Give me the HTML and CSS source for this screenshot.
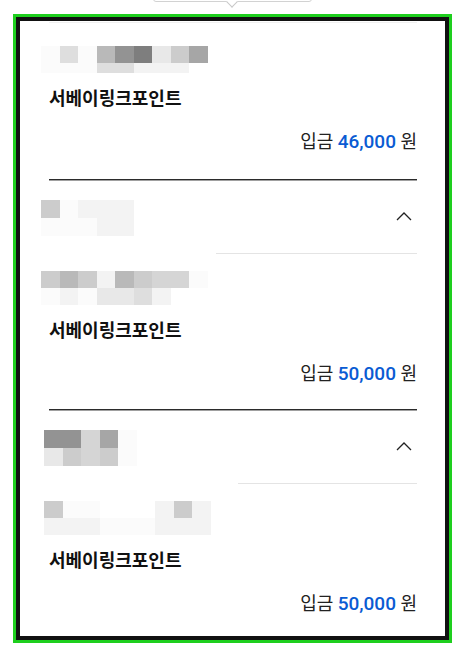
FILE: index.html
```html
<!DOCTYPE html>
<html lang="ko">
<head>
  <meta charset="UTF-8">
  <title>입금 내역</title>
  <link rel="stylesheet" href="styles.css">
</head>
<body>

  <div class="tooltip"></div>

  <div class="frame">
    <div class="panel">

      <section class="record partial">
        <div class="rule-light"></div>
        <div class="detail">
          <div class="mosaic short">
            <i class="t0"></i><i class="t3"></i><i class="t0"></i><i class="t6"></i><i class="t8"></i><i class="t9"></i><i class="t2"></i><i class="t5"></i><i class="t7"></i>
            <i class="t0"></i><i class="t0"></i><i class="t0"></i><i class="t3"></i><i class="t3"></i><i class="t1"></i><i class="t1"></i><i class="t1"></i><i></i>
          </div>
          <p class="title">서베이링크포인트</p>
          <p class="amount">입금 <b>46,000</b> 원</p>
        </div>
      </section>

      <section class="record">
        <div class="head">
          <div class="mosaic five">
            <i class="t5"></i><i class="t0"></i><i class="t1"></i><i class="t1"></i><i class="t1"></i>
            <i class="t0"></i><i class="t0"></i><i class="t0"></i><i class="t1"></i><i class="t1"></i>
          </div>
          <svg class="chevron" width="16" height="10" viewBox="0 0 16 10"><polyline points="1,9 8,2 15,9"/></svg>
        </div>
        <div class="rule-light wide"></div>
        <div class="detail">
          <div class="mosaic">
            <i class="t5"></i><i class="t6"></i><i class="t5"></i><i class="t1"></i><i class="t6"></i><i class="t5"></i><i class="t4"></i><i class="t4"></i><i class="t0"></i>
            <i class="t0"></i><i class="t1"></i><i class="t0"></i><i class="t2"></i><i class="t2"></i><i class="t3"></i><i class="t1"></i><i></i><i></i>
          </div>
          <p class="title">서베이링크포인트</p>
          <p class="amount">입금 <b>50,000</b> 원</p>
        </div>
      </section>

      <section class="record">
        <div class="head">
          <div class="mosaic five shift">
            <i class="t8"></i><i class="t8"></i><i class="t4"></i><i class="t7"></i><i class="t0"></i>
            <i class="t2"></i><i class="t5"></i><i class="t4"></i><i class="t5"></i><i class="t0"></i>
          </div>
          <svg class="chevron" width="16" height="10" viewBox="0 0 16 10"><polyline points="1,9 8,2 15,9"/></svg>
        </div>
        <div class="rule-light narrow"></div>
        <div class="detail">
          <div class="mosaic shift">
            <i class="t5"></i><i class="t0"></i><i class="t0"></i><i></i><i></i><i></i><i class="t1"></i><i class="t5"></i><i class="t1"></i>
            <i class="t1"></i><i class="t1"></i><i class="t1"></i><i class="t0"></i><i class="t0"></i><i class="t0"></i><i class="t1"></i><i class="t1"></i><i class="t1"></i>
          </div>
          <p class="title">서베이링크포인트</p>
          <p class="amount">입금 <b>50,000</b> 원</p>
        </div>
      </section>

    </div>
  </div>

</body>
</html>
```

FILE: styles.css
```css
body {
  margin: 0;
  background-color: #fff;
  font-family: Roboto, "Noto Sans CJK KR", sans-serif;
  color: #222;
  position: relative;
}

/* bubble peeking in from above */
.tooltip {
  position: absolute;
  left: 153px;
  top: -20px;
  width: 157px;
  height: 20px;
  border: 1px solid #d2d2d2;
  border-radius: 3px;
  background-color: #fff;
}

.tooltip::after {
  content: "";
  position: absolute;
  left: 74px;
  bottom: -5px;
  width: 7px;
  height: 7px;
  background-color: #fff;
  border-right: 1px solid #c8c8c8;
  border-bottom: 1px solid #c8c8c8;
  transform: rotate(45deg);
}

.frame {
  margin: 14px 0 0 13px;
  width: 433px;
  border: 3px solid #1ecf1e;
}

.panel {
  height: 615px;
  border: 4px solid #111;
  padding: 0 28px 0 29px;
  overflow: hidden;
}

.record {
  border-top: 1px solid #2b2b2b;
  box-shadow: inset 0 1px 0 #a0a0a0;
  padding-bottom: 23px;
}

.record.partial {
  border-top: none;
  box-shadow: none;
  padding-top: 1px;
  padding-bottom: 25px;
}

.head {
  display: flex;
  justify-content: space-between;
  align-items: flex-start;
  padding-top: 20px;
}

.chevron {
  margin: 11px 5px 0 0;
  fill: none;
  stroke: #222;
  stroke-width: 1.3;
}

.rule-light {
  height: 1px;
  background-color: #f0f0f0;
}

.rule-light.wide,
.rule-light.narrow {
  margin: 17px 0 0 auto;
  background-color: #e4e4e4;
}

.rule-light.wide {
  width: 201px;
}

.rule-light.narrow {
  width: 179px;
}

.detail {
  padding-top: 17px;
}

.partial .detail {
  padding-top: 23px;
}

/* pixelated (censored) account names */
.mosaic {
  display: grid;
  grid-template-columns: repeat(9, 18.5px);
  grid-auto-rows: 17px;
  margin-left: -8px;
}

.mosaic.five {
  grid-template-columns: repeat(5, 18.5px);
  grid-auto-rows: 18px;
}

.mosaic.short {
  grid-template-rows: 17px 10px;
}

.mosaic.shift {
  margin-left: -5px;
}

.t0 { background-color: #fbfbfb; }
.t1 { background-color: #f3f3f3; }
.t2 { background-color: #e8e8e8; }
.t3 { background-color: #dedede; }
.t4 { background-color: #d5d5d5; }
.t5 { background-color: #cccccc; }
.t6 { background-color: #b9b9b9; }
.t7 { background-color: #a6a6a6; }
.t8 { background-color: #939393; }
.t9 { background-color: #7e7e7e; }

.title {
  margin: 14px 0 0;
  font-size: 18px;
  line-height: 24px;
  font-weight: bold;
  color: #111;
}

.amount {
  margin: 19px 0 0;
  text-align: right;
  font-size: 18px;
  line-height: 24px;
}

.amount b {
  font-size: 19px;
  font-weight: 500;
  color: #0a5bd3;
}
```
